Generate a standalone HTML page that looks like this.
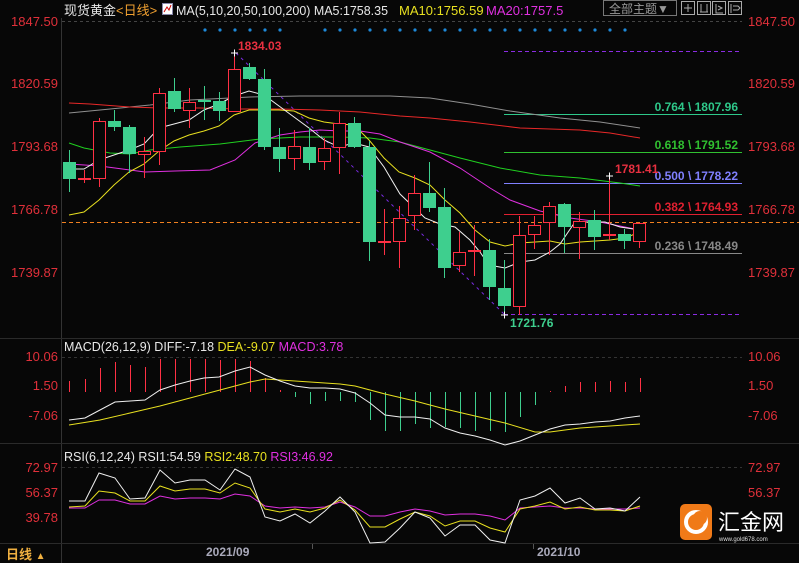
<!DOCTYPE html>
<html><head><meta charset="utf-8"><style>
html,body{margin:0;padding:0;background:#070707;width:799px;height:563px;overflow:hidden}
svg{display:block}
text{font-family:"Liberation Sans","Noto Sans CJK SC",sans-serif}
</style></head><body>
<svg id="s" width="799" height="563" xmlns="http://www.w3.org/2000/svg">
<rect width="799" height="563" fill="#070707"/>
<line x1="61.5" y1="18" x2="61.5" y2="563" stroke="#333"/>
<line x1="0" y1="338.5" x2="799" y2="338.5" stroke="#2a2a2a"/>
<line x1="0" y1="443.5" x2="799" y2="443.5" stroke="#2a2a2a"/>
<line x1="0" y1="543.5" x2="799" y2="543.5" stroke="#2a2a2a"/>
<line x1="62" y1="21.5" x2="742" y2="21.5" stroke="#444" stroke-dasharray="3,3"/>
<line x1="62" y1="357.5" x2="742" y2="357.5" stroke="#333" stroke-dasharray="3,3"/>
<line x1="62" y1="467.5" x2="742" y2="467.5" stroke="#333" stroke-dasharray="3,3"/>
<text x="64" y="15" font-size="13" fill="#e8e8e8">现货黄金<tspan fill="#f0a030">&lt;日线&gt;</tspan></text>
<rect x="162.5" y="3.5" width="10" height="11" fill="#fff" stroke="#88a"/>
<polyline points="164,12 167,7 169,10 171,5" fill="none" stroke="#c00" stroke-width="1"/>
<text x="176" y="15" font-size="13" fill="#e8e8e8" textLength="212" lengthAdjust="spacingAndGlyphs">MA(5,10,20,50,100,200) MA5:1758.35</text>
<text x="399" y="15" font-size="13" fill="#e8e020">MA10:1756.59</text>
<text x="486" y="15" font-size="13" fill="#e030e0">MA20:1757.5</text>
<rect x="603.5" y="0.5" width="73" height="15" fill="none" stroke="#777"/>
<text x="609" y="13" font-size="12" fill="#999">全部主题▼</text>
<g fill="none" stroke="#aaa"><rect x="681.5" y="1.5" width="13" height="13"/><rect x="697.5" y="1.5" width="13" height="13"/><rect x="712.5" y="1.5" width="13" height="13"/><rect x="728.5" y="1.5" width="13" height="13"/>
<path d="M688 4v8M684 8h8M701 4v8M707 4v8M700 12h8M716 4v9h7M718 6l4 2-4 2M731 4v9M733 6h5l2 2-2 2h-5"/></g>
<g font-size="13" fill="#e0303a">
<text x="58" y="26" text-anchor="end">1847.50</text>
<text x="58" y="88" text-anchor="end">1820.59</text>
<text x="58" y="151" text-anchor="end">1793.68</text>
<text x="58" y="214" text-anchor="end">1766.78</text>
<text x="58" y="277" text-anchor="end">1739.87</text>
<text x="748" y="26">1847.50</text>
<text x="748" y="88">1820.59</text>
<text x="748" y="151">1793.68</text>
<text x="748" y="214">1766.78</text>
<text x="748" y="277">1739.87</text>
<text x="58" y="361" text-anchor="end">10.06</text>
<text x="58" y="390" text-anchor="end">1.50</text>
<text x="58" y="420" text-anchor="end">-7.06</text>
<text x="748" y="361">10.06</text>
<text x="748" y="390">1.50</text>
<text x="748" y="420">-7.06</text>
<text x="58" y="472" text-anchor="end">72.97</text>
<text x="58" y="497" text-anchor="end">56.37</text>
<text x="58" y="522" text-anchor="end">39.78</text>
<text x="748" y="472">72.97</text>
<text x="748" y="497">56.37</text>
</g>
<g stroke-width="1">
<line x1="504" y1="51.5" x2="742" y2="51.5" stroke="#8a2be2" stroke-dasharray="4,3"/>
<line x1="504" y1="314.5" x2="742" y2="314.5" stroke="#8a2be2" stroke-dasharray="4,3"/>
<line x1="504" y1="114.5" x2="742" y2="114.5" stroke="#2ec88a"/>
<line x1="504" y1="152.5" x2="742" y2="152.5" stroke="#30c030"/>
<line x1="504" y1="183.5" x2="742" y2="183.5" stroke="#8080ff"/>
<line x1="504" y1="214.5" x2="742" y2="214.5" stroke="#e02030"/>
<line x1="504" y1="253.5" x2="742" y2="253.5" stroke="#888"/>
<line x1="62" y1="222.5" x2="799" y2="222.5" stroke="#f08020" stroke-dasharray="4,3"/>
<line x1="236" y1="53" x2="504" y2="314" stroke="#7a2be2" stroke-dasharray="3,4"/>
</g>
<g font-size="12" font-weight="bold" text-anchor="end">
<text x="738" y="111" fill="#2ec88a">0.764 \ 1807.96</text>
<text x="738" y="149" fill="#30c030">0.618 \ 1791.52</text>
<text x="738" y="180" fill="#8080ff">0.500 \ 1778.22</text>
<text x="738" y="211" fill="#e02030">0.382 \ 1764.93</text>
<text x="738" y="250" fill="#888">0.236 \ 1748.49</text>
</g>
<g id="dots" fill="#1e88d8"></g>
<g id="ma" fill="none" stroke-width="1"></g>
<g id="candles"></g>
<g font-size="12" font-weight="bold">
<text x="238" y="50" fill="#e83040">1834.03</text>
<text x="615" y="173" fill="#e83040">1781.41</text>
<text x="510" y="327" fill="#3ecf8e">1721.76</text>
</g>
<g stroke="#fff"><path d="M231 53h7M234.5 49.5v7M606 176h7M609.5 172.5v7M501 315h7M504.5 311.5v7"/></g>
<text x="64" y="351" font-size="12.5" fill="#e8e8e8">MACD(26,12,9) DIFF:-7.18 <tspan fill="#e8e020">DEA:-9.07</tspan> <tspan fill="#e030e0">MACD:3.78</tspan></text>
<g id="macd"></g>
<text x="64" y="461" font-size="12.5" fill="#e8e8e8">RSI(6,12,24) RSI1:54.59 <tspan fill="#e8e020">RSI2:48.70</tspan> <tspan fill="#e030e0">RSI3:46.92</tspan></text>
<g id="rsi" fill="none"></g>
<rect x="680" y="504" width="32" height="36" rx="5" fill="#f07a18"/>
<circle cx="696" cy="522" r="10" fill="none" stroke="#fff" stroke-width="4"/>
<circle cx="700" cy="518" r="7" fill="#f07a18"/>
<text x="718" y="530" font-size="22" fill="#fff" font-family="Noto Sans CJK SC,sans-serif">汇金网</text>
<text x="719" y="541" font-size="6" fill="#ddd">www.gold678.com</text>
<text x="6" y="559" font-size="13" font-weight="bold" fill="#f0b040">日线 <tspan font-size="10">▲</tspan></text>
<line x1="312.5" y1="544" x2="312.5" y2="549" stroke="#555"/>
<line x1="533.5" y1="544" x2="533.5" y2="549" stroke="#555"/>
<text x="206" y="556" font-size="12" font-weight="bold" fill="#aab">2021/09</text>
<text x="537" y="556" font-size="12" font-weight="bold" fill="#aab">2021/10</text>
</svg>
<script>
var NS="http://www.w3.org/2000/svg";
function el(p,t,a){var e=document.createElementNS(NS,t);for(var k in a)e.setAttribute(k,a[k]);p.appendChild(e);return e;}
var d=document.getElementById('dots');
for(var x=205;x<=285;x+=15)el(d,'circle',{cx:x,cy:30,r:1.6});
for(x=325;x<=626;x+=15)el(d,'circle',{cx:x,cy:30,r:1.6});
var ma=document.getElementById('ma');
function pl(g,pts,c){el(g,'polyline',{points:pts.map(function(p){return p.join(',')}).join(' '),stroke:c,fill:'none'});}
pl(ma,[[69,113],[100,110],[150,105],[190,100],[250,97],[300,96],[340,96],[390,96],[430,98],[470,104],[510,111],[560,118],[600,122],[640,128]],'#909090');
pl(ma,[[69,103],[90,104],[130,107],[160,108],[200,108],[240,109],[280,109],[320,110],[360,112],[400,116],[430,118],[470,122],[520,128],[580,130],[610,133],[640,138]],'#e82828');
pl(ma,[[69,143],[84,148],[110,153],[130,154],[150,150],[180,147],[220,144],[260,139],[300,137],[340,137],[370,138],[400,142],[430,150],[460,158],[500,168],[540,175],[580,178],[620,183],[640,186]],'#20d020');
pl(ma,[[69,164],[100,166],[130,170],[145,172],[175,171],[210,170],[235,160],[255,143],[280,135],[300,132],[320,130],[340,131],[360,131],[380,134],[400,142],[430,152],[460,168],[490,188],[510,200],[540,211],[570,218],[600,222],[640,230]],'#e030e0');
pl(ma,[[69,215],[84,212],[99,200],[114,185],[129,172],[144,164],[159,151],[174,141],[189,135],[204,131],[219,126],[234,115],[249,110],[264,110],[279,110],[294,111],[309,118],[324,122],[339,124],[354,125],[369,140],[384,158],[399,172],[415,178],[430,185],[445,200],[460,213],[475,230],[490,242],[505,246],[520,243],[535,242],[550,241],[565,244],[580,242],[595,241],[610,240],[625,238],[640,232]],'#e8e020');
pl(ma,[[69,169],[84,169],[99,160],[114,155],[129,150],[144,144],[159,128],[174,124],[189,120],[204,110],[219,104],[234,96],[249,91],[264,95],[279,106],[294,117],[309,128],[324,140],[339,147],[354,143],[369,147],[384,167],[400,194],[425,218],[440,224],[455,227],[470,240],[480,252],[489,265],[505,268],[520,262],[535,260],[550,252],[560,244],[575,222],[590,222],[605,222],[620,227],[640,230]],'#f0f0f0');
var C=[[69,'g',162,179,150,192],[84,'c',178,178,170,183],[99,'r',121,178,118,187],[114,'g',121,127,110,131],[129,'g',127,154,125,173],[144,'r',151,154,137,178],[159,'r',93,151,88,165],[174,'g',91,109,78,112],[189,'r',102,110,88,128],[204,'g',100,102,86,120],[219,'g',101,111,92,121],[234,'r',69,111,53,112],[249,'g',67,79,63,80],[264,'g',79,147,69,150],[279,'g',147,159,128,172],[294,'r',146,158,130,170],[309,'g',147,163,128,170],[324,'r',148,161,138,170],[339,'r',123,147,112,174],[354,'g',123,147,117,148],[369,'g',147,242,141,261],[384,'c',241,241,209,255],[399,'r',218,241,206,268],[414,'r',193,215,175,230],[429,'g',193,208,162,212],[444,'g',207,268,188,278],[459,'r',252,265,232,272],[474,'c',250,250,225,276],[489,'g',250,287,239,300],[504,'g',288,306,260,315],[519,'r',235,306,216,315],[534,'r',225,234,216,249],[549,'r',206,222,202,255],[564,'g',204,227,203,253],[579,'r',221,227,212,259],[594,'g',220,237,210,250],[609,'c',234,234,176,240],[624,'g',234,241,229,249],[639,'r',223,241,223,248]];
var cg=document.getElementById('candles');
C.forEach(function(c){var x=c[0],col=c[1]=='g'?'#3ecf8e':'#ff3044';
el(cg,'line',{x1:x+.5,x2:x+.5,y1:c[4],y2:c[5],stroke:col});
if(c[1]=='g')el(cg,'rect',{x:x-6,y:c[2],width:13,height:Math.max(1,c[3]-c[2]),fill:col});
else if(c[1]=='c')el(cg,'rect',{x:x-6,y:c[2],width:13,height:2,fill:col});
else el(cg,'rect',{x:x-5.5,y:c[2]+.5,width:12,height:c[3]-c[2],fill:'#070707',stroke:col});});
var mg=document.getElementById('macd');
var H=[[69,381],[85,379],[100,368],[115,362],[130,365],[145,367],[160,359],[175,359],[190,359],[205,359],[220,360],[235,359],[250,361],[265,378],[280,390],[295,397],[310,404],[325,401],[340,401],[355,402],[370,420],[385,431],[400,431],[415,424],[430,428],[445,427],[460,428],[475,431],[490,431],[505,432],[520,417],[535,405],[550,391],[565,386],[580,382],[595,382],[610,381],[625,382],[640,378]];
H.forEach(function(h){el(mg,'line',{x1:h[0]+.5,x2:h[0]+.5,y1:h[1],y2:392,stroke:h[1]<392?'#ff3044':'#3ecf8e'});});
pl(mg,[[69,425],[100,420],[130,413],[160,406],[190,398],[220,390],[250,382],[265,379],[280,380],[310,382],[340,384],[355,386],[385,394],[415,401],[445,409],[475,416],[505,423],[535,432],[550,432],[580,428],[610,426],[640,424]],'#e8e020');
pl(mg,[[69,420],[85,418],[100,410],[115,402],[130,401],[145,400],[160,390],[175,385],[190,381],[204,378],[219,377],[235,371],[250,367],[265,375],[280,381],[295,386],[310,388],[325,388],[340,389],[355,393],[370,403],[385,415],[400,417],[415,417],[430,419],[445,428],[460,433],[475,436],[490,440],[505,445],[520,441],[535,435],[550,429],[565,425],[580,424],[595,422],[610,421],[625,418],[640,416]],'#f0f0f0');
var rg=document.getElementById('rsi');
var X=[69,85,99,115,130,145,160,175,190,205,220,235,250,265,280,295,310,325,340,355,370,385,400,415,430,445,460,475,490,505,520,535,550,565,580,595,610,625,640];
function z(ys){return X.map(function(x,i){return [x,ys[i]]});}
pl(rg,z([508,508,500,500,504,504,496,499,498,498,499,494,496,506,508,507,508,507,502,507,516,516,512,509,511,515,514,514,516,520,508,507,506,508,508,509,509,509,508]),'#e030e0');
pl(rg,z([507,506,491,493,501,501,486,491,489,489,493,483,488,509,512,509,512,508,500,510,527,527,519,512,516,526,521,521,528,532,509,506,502,509,507,510,510,511,506]),'#e8e020');
pl(rg,z([501,501,473,478,499,498,470,483,480,480,490,469,477,517,521,514,523,511,497,512,543,542,528,512,518,536,525,525,540,543,500,496,488,503,498,509,508,511,497]),'#f0f0f0');
</script>
</body></html>
